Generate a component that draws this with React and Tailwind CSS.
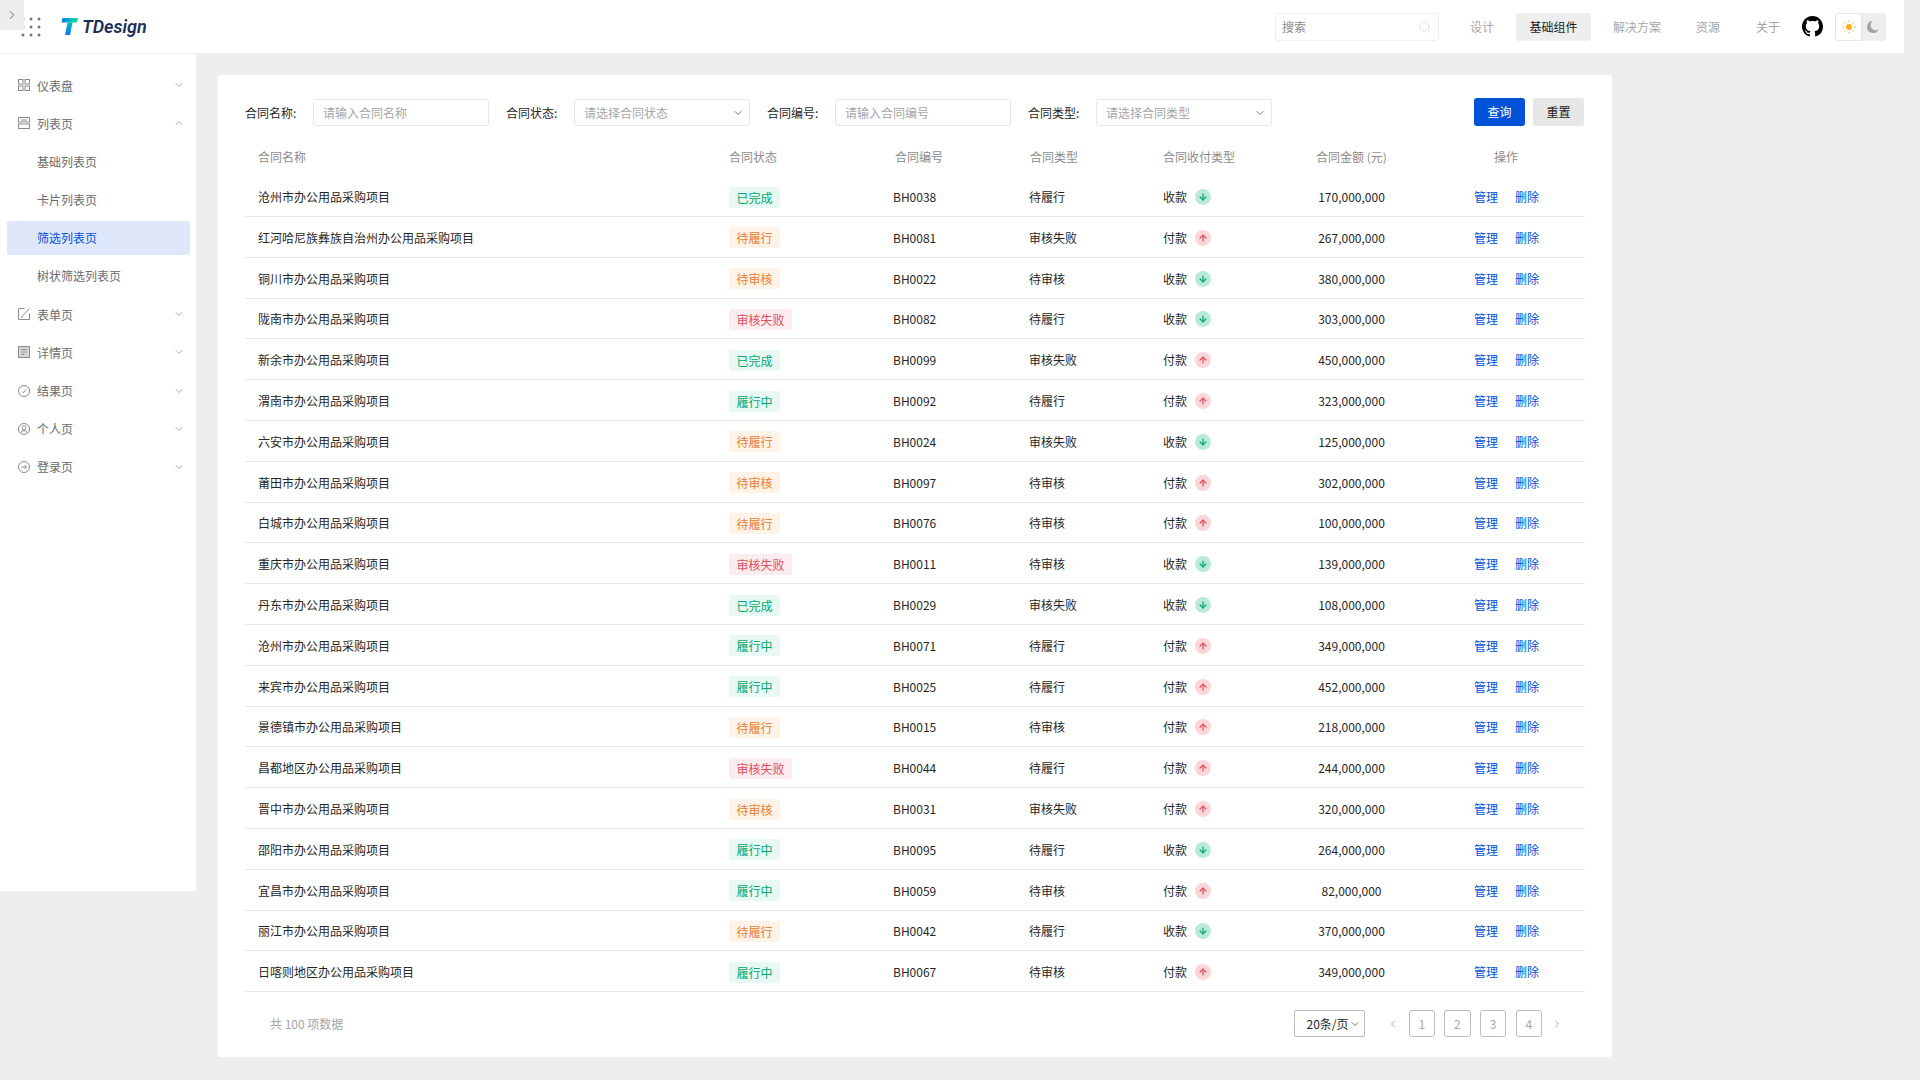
import { ChevronDown, ChevronUp, ChevronLeft, ChevronRight, Search, ArrowDown, ArrowUp } from "lucide-react";

const rows = [
  ["沧州市办公用品采购项目", "已完成", "BH0038", "待履行", "收款", "170,000,000"],
  ["红河哈尼族彝族自治州办公用品采购项目", "待履行", "BH0081", "审核失败", "付款", "267,000,000"],
  ["铜川市办公用品采购项目", "待审核", "BH0022", "待审核", "收款", "380,000,000"],
  ["陇南市办公用品采购项目", "审核失败", "BH0082", "待履行", "收款", "303,000,000"],
  ["新余市办公用品采购项目", "已完成", "BH0099", "审核失败", "付款", "450,000,000"],
  ["渭南市办公用品采购项目", "履行中", "BH0092", "待履行", "付款", "323,000,000"],
  ["六安市办公用品采购项目", "待履行", "BH0024", "审核失败", "收款", "125,000,000"],
  ["莆田市办公用品采购项目", "待审核", "BH0097", "待审核", "付款", "302,000,000"],
  ["白城市办公用品采购项目", "待履行", "BH0076", "待审核", "付款", "100,000,000"],
  ["重庆市办公用品采购项目", "审核失败", "BH0011", "待审核", "收款", "139,000,000"],
  ["丹东市办公用品采购项目", "已完成", "BH0029", "审核失败", "收款", "108,000,000"],
  ["沧州市办公用品采购项目", "履行中", "BH0071", "待履行", "付款", "349,000,000"],
  ["来宾市办公用品采购项目", "履行中", "BH0025", "待履行", "付款", "452,000,000"],
  ["景德镇市办公用品采购项目", "待履行", "BH0015", "待审核", "付款", "218,000,000"],
  ["昌都地区办公用品采购项目", "审核失败", "BH0044", "待履行", "付款", "244,000,000"],
  ["晋中市办公用品采购项目", "待审核", "BH0031", "审核失败", "付款", "320,000,000"],
  ["邵阳市办公用品采购项目", "履行中", "BH0095", "待履行", "收款", "264,000,000"],
  ["宜昌市办公用品采购项目", "履行中", "BH0059", "待审核", "付款", "82,000,000"],
  ["丽江市办公用品采购项目", "待履行", "BH0042", "待履行", "收款", "370,000,000"],
  ["日喀则地区办公用品采购项目", "履行中", "BH0067", "待审核", "付款", "349,000,000"],
];

const tagStyles = {
  已完成: "bg-[#e8f8f2] text-[#00a870]",
  履行中: "bg-[#e8f8f2] text-[#00a870]",
  待履行: "bg-[#fef3e6] text-[#ed7b2f]",
  待审核: "bg-[#fef3e6] text-[#ed7b2f]",
  审核失败: "bg-[#fdecee] text-[#e34d59]",
};

const gridCols = "grid grid-cols-[471px_164px_136px_134px_153px_160px_122px] items-center";

const IconDash = () => (
  <svg width="14" height="14" viewBox="0 0 14 14" fill="none" stroke="#8c8c8c" strokeWidth="1">
    <rect x="1.5" y="1.5" width="4.5" height="4.5" />
    <rect x="8" y="1.5" width="4.5" height="4.5" />
    <rect x="1.5" y="8" width="4.5" height="4.5" />
    <rect x="8" y="8" width="4.5" height="4.5" />
  </svg>
);
const IconList = () => (
  <svg width="14" height="14" viewBox="0 0 14 14" fill="none" stroke="#8c8c8c" strokeWidth="1">
    <rect x="1.5" y="1.5" width="11" height="4.5" />
    <rect x="1.5" y="8" width="11" height="4.5" />
    <path d="M4 4h6" />
  </svg>
);
const IconForm = () => (
  <svg width="14" height="14" viewBox="0 0 14 14" fill="none" stroke="#8c8c8c" strokeWidth="1">
    <path d="M12.5 6.5v6h-11v-11h6" />
    <path d="M5 9.5 12.5 1.5M5 9.5l-.5 1 1-.5" />
  </svg>
);
const IconDetail = () => (
  <svg width="14" height="14" viewBox="0 0 14 14" fill="none" stroke="#8c8c8c" strokeWidth="1">
    <rect x="1.5" y="1.5" width="11" height="11" fill="#d9d9d9" />
    <path d="M4 4.5h6M4 7h6M4 9.5h3.5" />
  </svg>
);
const IconResult = () => (
  <svg width="14" height="14" viewBox="0 0 14 14" fill="none" stroke="#8c8c8c" strokeWidth="1">
    <circle cx="7" cy="7" r="5.5" />
    <path d="M5 7.5 6.3 8.8 9 5.5" />
  </svg>
);
const IconUser = () => (
  <svg width="14" height="14" viewBox="0 0 14 14" fill="none" stroke="#8c8c8c" strokeWidth="1">
    <circle cx="7" cy="7" r="5.5" />
    <circle cx="7" cy="5.8" r="2" />
    <path d="M3.5 11c.6-1.6 2-2.3 3.5-2.3s2.900.7 3.500 2.300" />
  </svg>
);
const IconLogin = () => (
  <svg width="14" height="14" viewBox="0 0 14 14" fill="none" stroke="#8c8c8c" strokeWidth="1">
    <circle cx="7" cy="7" r="5.5" />
    <path d="M4.500 7h5M7.500 5l2 2-2 2" />
  </svg>
);

const GridDots = () => (
  <svg width="20" height="20" viewBox="0 0 20 20" fill="#757575">
    {[2, 10, 18].map((y) =>
      [2, 10, 18].map((x) => <circle key={`${x}-${y}`} cx={x} cy={y} r="1.500" />)
    )}
  </svg>
);

const Logo = () => (
  <svg width="18" height="18" viewBox="0 0 18 18">
    <defs>
      <linearGradient id="tBar" x1="0" y1="0" x2="1" y2="0">
        <stop offset="0" stopColor="#0a78f0" />
        <stop offset="0.5" stopColor="#00b8c8" />
        <stop offset="1" stopColor="#1fd98a" />
      </linearGradient>
      <linearGradient id="tStem" x1="0" y1="0" x2="0" y2="1">
        <stop offset="0" stopColor="#00c2b8" />
        <stop offset="1" stopColor="#0a78f0" />
      </linearGradient>
    </defs>
    <path d="M1.500 0H17l-1 4.500H0.500z" fill="url(#tBar)" />
    <path d="M6.500 4.500h5L9 17H4z" fill="url(#tStem)" />
  </svg>
);

const GitHub = () => (
  <svg width="21" height="21" viewBox="0 0 16 16" fill="#000">
    <path d="M8 0C3.580 0 0 3.580 0 8c0 3.540 2.290 6.530 5.470 7.590.4.070.55-.17.55-.38 0-.19-.01-.82-.01-1.490-2.010.370-2.530-.49-2.690-.94-.09-.23-.48-.94-.82-1.130-.28-.15-.68-.52-.01-.53.630-.01 1.080.58 1.230.82.720 1.210 1.870.870 2.330.66.070-.52.280-.87.510-1.070-1.780-.2-3.640-.89-3.640-3.950 0-.87.310-1.590.82-2.150-.08-.2-.36-1.020.08-2.120 0 0 .67-.21 2.200.82.640-.18 1.320-.27 2-.27s1.360.09 2 .27c1.530-1.040 2.200-.82 2.200-.82.440 1.100.16 1.920.08 2.120.51.560.82 1.270.82 2.150 0 3.070-1.870 3.750-3.650 3.950.29.250.54.730.54 1.480 0 1.070-.01 1.930-.01 2.200 0 .21.150.46.550.38A8.010 8.010 0 0 0 16 8c0-4.420-3.580-8-8-8z" />
  </svg>
);

const Sun = () => (
  <svg width="14" height="14" viewBox="0 0 14 14" fill="none" stroke="#f5a623" strokeWidth="1">
    <circle cx="7" cy="7" r="3" fill="#ffb020" stroke="none" />
    <path d="M7 .5v1.500M7 12v1.500M.5 7H2M12 7h1.500M2.400 2.400l1 1M10.600 10.600l1 1M2.400 11.600l1-1M10.600 3.400l1-1" />
  </svg>
);

const Moon = () => (
  <svg width="14" height="14" viewBox="0 0 14 14" fill="#a6a6a6">
    <path d="M8 1a6 6 0 1 0 5.500 8.400A5 5 0 0 1 8 1z" />
  </svg>
);

const NavItem = ({ icon, label, open }) => (
  <div className="h-[34px] flex items-center pl-[9.500px] pr-[5px] text-[#6b6b6b]">
    <span className="w-[20.500px] flex items-center">{icon}</span>
    <span className="flex-1 pt-px">{label}</span>
    {open ? (
      <ChevronUp size={12} color="#8c8c8c" strokeWidth={1.5} />
    ) : (
      <ChevronDown size={12} color="#8c8c8c" strokeWidth={1.5} />
    )}
  </div>
);

const SubItem = ({ label, active }) => (
  <div
    className={
      active
        ? "h-[34px] flex items-center pl-[30px] pt-px rounded-[3px] bg-[#dfe8fb] text-[#0052d9]"
        : "h-[34px] flex items-center pl-[30px] pt-px text-[#6b6b6b]"
    }
  >
    {label}
  </div>
);

const Field = ({ label, placeholder, select, className }) => (
  <div className={`flex items-center ${className}`}>
    <span className="w-[68px] text-[#262626]">{label}</span>
    <div className="w-[176px] h-[27px] px-[9px] flex items-center justify-between bg-white rounded-[3px] border border-[#e7e7e7] text-[#a6a6a6]">
      <span>{placeholder}</span>
      {select && <ChevronDown size={12} color="#4d4d4d" strokeWidth={1.5} className="-mr-[4px]" />}
    </div>
  </div>
);

export default function App() {
  return (
    <div className="w-[1920px] h-[1080px] overflow-hidden relative bg-[#eeeeee] text-[12px] leading-[20px] font-['Noto_Sans_CJK_SC','Microsoft_YaHei',sans-serif]">
      {/* collapse handle over the header */}
      <div className="absolute left-0 top-0 w-[24px] h-[30px] bg-[#eeeeee] flex items-center justify-center z-10">
        <ChevronRight size={14} color="#5c5c5c" strokeWidth={1.5} />
      </div>

      {/* Header */}
      <header className="w-[1904px] h-[53px] bg-white flex items-center pl-[21px]">
        <GridDots />
        <div className="ml-[20px] flex items-center">
          <Logo />
          <span className="ml-[3px] text-[#1b2f5b] text-[18px] font-semibold italic font-['Roboto',sans-serif]">TDesign</span>
        </div>

        <div className="ml-auto w-[164px] h-[28px] px-[6px] flex items-center justify-between rounded-[3px] border border-[#eeeeee] text-[#8c8c8c]">
          <span>搜索</span>
          <Search size={14} color="#dcdcdc" strokeWidth={1.5} />
        </div>
        <span className="ml-[31px] text-[#a6a6a6]">设计</span>
        <span className="ml-[22px] w-[75px] h-[28px] flex items-center justify-center rounded-[3px] bg-[#eeeeee] text-[#1a1a1a]">基础组件</span>
        <span className="ml-[22px] text-[#a6a6a6]">解决方案</span>
        <span className="ml-[35px] text-[#a6a6a6]">资源</span>
        <span className="ml-[36px] text-[#a6a6a6]">关于</span>
        <span className="ml-[22px] flex"><GitHub /></span>
        <div className="ml-[12px] mr-[18px] w-[51px] h-[28px] flex items-center rounded-[3px] bg-[#eeeeee]">
          <span className="w-[27px] h-[28px] flex items-center justify-center rounded-[3px] bg-white border border-[#e7e7e7]">
            <Sun />
          </span>
          <span className="flex-1 flex items-center justify-center pr-[4px]"><Moon /></span>
        </div>
      </header>

      <div className="flex items-start">
        {/* Sidebar */}
        <aside className="w-[196px] h-[837px] mt-px bg-white pl-[7px] pr-[6px] pt-[14px] flex flex-col gap-[4.2px] shrink-0">
          <NavItem icon={<IconDash />} label="仪表盘" />
          <NavItem icon={<IconList />} label="列表页" open />
          <SubItem label="基础列表页" />
          <SubItem label="卡片列表页" />
          <SubItem label="筛选列表页" active />
          <SubItem label="树状筛选列表页" />
          <NavItem icon={<IconForm />} label="表单页" />
          <NavItem icon={<IconDetail />} label="详情页" />
          <NavItem icon={<IconResult />} label="结果页" />
          <NavItem icon={<IconUser />} label="个人页" />
          <NavItem icon={<IconLogin />} label="登录页" />
        </aside>

        {/* Main card */}
        <main className="ml-[22px] mt-[22px] w-[1394px] h-[982px] bg-white rounded-[3px] pl-[27px] pr-[28px] pt-[23px]">
          {/* Filter form */}
          <div className="flex items-end h-[28px]">
            <Field label="合同名称:" placeholder="请输入合同名称" />
            <Field label="合同状态:" placeholder="请选择合同状态" select className="ml-[17px]" />
            <Field label="合同编号:" placeholder="请输入合同编号" className="ml-[17px]" />
            <Field label="合同类型:" placeholder="请选择合同类型" select className="ml-[17px]" />
            <button className="ml-auto w-[51px] h-[28px] rounded-[3px] bg-[#0052d9] text-white">查询</button>
            <button className="ml-[8px] w-[51px] h-[28px] rounded-[3px] bg-[#e7e7e7] text-[#1a1a1a]">重置</button>
          </div>

          {/* Table */}
          <div className="w-[1340px] mt-[10px]">
            <div className={`${gridCols} h-[40.2px] pt-[2px] text-[#8c8c8c]`}>
              <span className="pl-[13px]">合同名称</span>
              <span className="pl-[13px]">合同状态</span>
              <span className="pl-[15px]">合同编号</span>
              <span className="pl-[14px]">合同类型</span>
              <span className="pl-[13px]">合同收付类型</span>
              <span className="pl-[13px]">合同金额 (元)</span>
              <span className="pl-[31px]">操作</span>
            </div>
            {rows.map((r, i) => (
              <div key={i} className={`${gridCols} h-[40.8px] pt-[2px] border-b border-[#e7e7e7] text-[#262626]`}>
                <span className="pl-[13px]">{r[0]}</span>
                <span className="pl-[13px] flex">
                  <span className={`px-[7.5px] h-[21px] leading-[21px] rounded-[2px] ${tagStyles[r[1]]}`}>{r[1]}</span>
                </span>
                <span className="pl-[13px]">{r[2]}</span>
                <span className="pl-[13px]">{r[3]}</span>
                <span className="pl-[13px] flex items-center">
                  {r[4]}
                  {r[4] === "收款" ? (
                    <span className="ml-[8px] w-[16px] h-[16px] rounded-full bg-[#b9ead8] flex items-center justify-center">
                      <ArrowDown size={10} color="#00a870" strokeWidth={3} />
                    </span>
                  ) : (
                    <span className="ml-[8px] w-[16px] h-[16px] rounded-full bg-[#fbd5d8] flex items-center justify-center">
                      <ArrowUp size={10} color="#e34d59" strokeWidth={3} />
                    </span>
                  )}
                </span>
                <span className="pl-[13px] w-[84px] text-center">{r[5]}</span>
                <span className="pl-[11px] flex gap-[17px] text-[#0052d9]">
                  <span>管理</span>
                  <span>删除</span>
                </span>
              </div>
            ))}
          </div>

          {/* Pagination */}
          <div className="w-[1340px] mt-[18px] flex items-center h-[27px]">
            <span className="ml-[25px] text-[#a6a6a6]">共 100 项数据</span>
            <div className="ml-auto w-[71.500px] h-[27px] pl-[12px] flex items-center rounded-[2px] border border-[#bdbdbd] text-[#262626]">
              <span className="whitespace-nowrap">20条/页</span>
              <ChevronDown size={12} color="#4d4d4d" strokeWidth={1.5} className="shrink-0" />
            </div>
            <ChevronLeft size={12} color="#8c8c8c" strokeWidth={1.5} className="ml-[22px]" />
            <div className="ml-[9.500px] flex gap-[9.170px] text-[#a6a6a6]">
              {[1, 2, 3, 4].map((n) => (
                <span key={n} className="w-[26.500px] h-[27px] flex items-center justify-center rounded-[3px] border border-[#bdbdbd]">{n}</span>
              ))}
            </div>
            <ChevronRight size={12} color="#8c8c8c" strokeWidth={1.5} className="ml-[9px] mr-[22px]" />
          </div>
        </main>
      </div>
    </div>
  );
}
